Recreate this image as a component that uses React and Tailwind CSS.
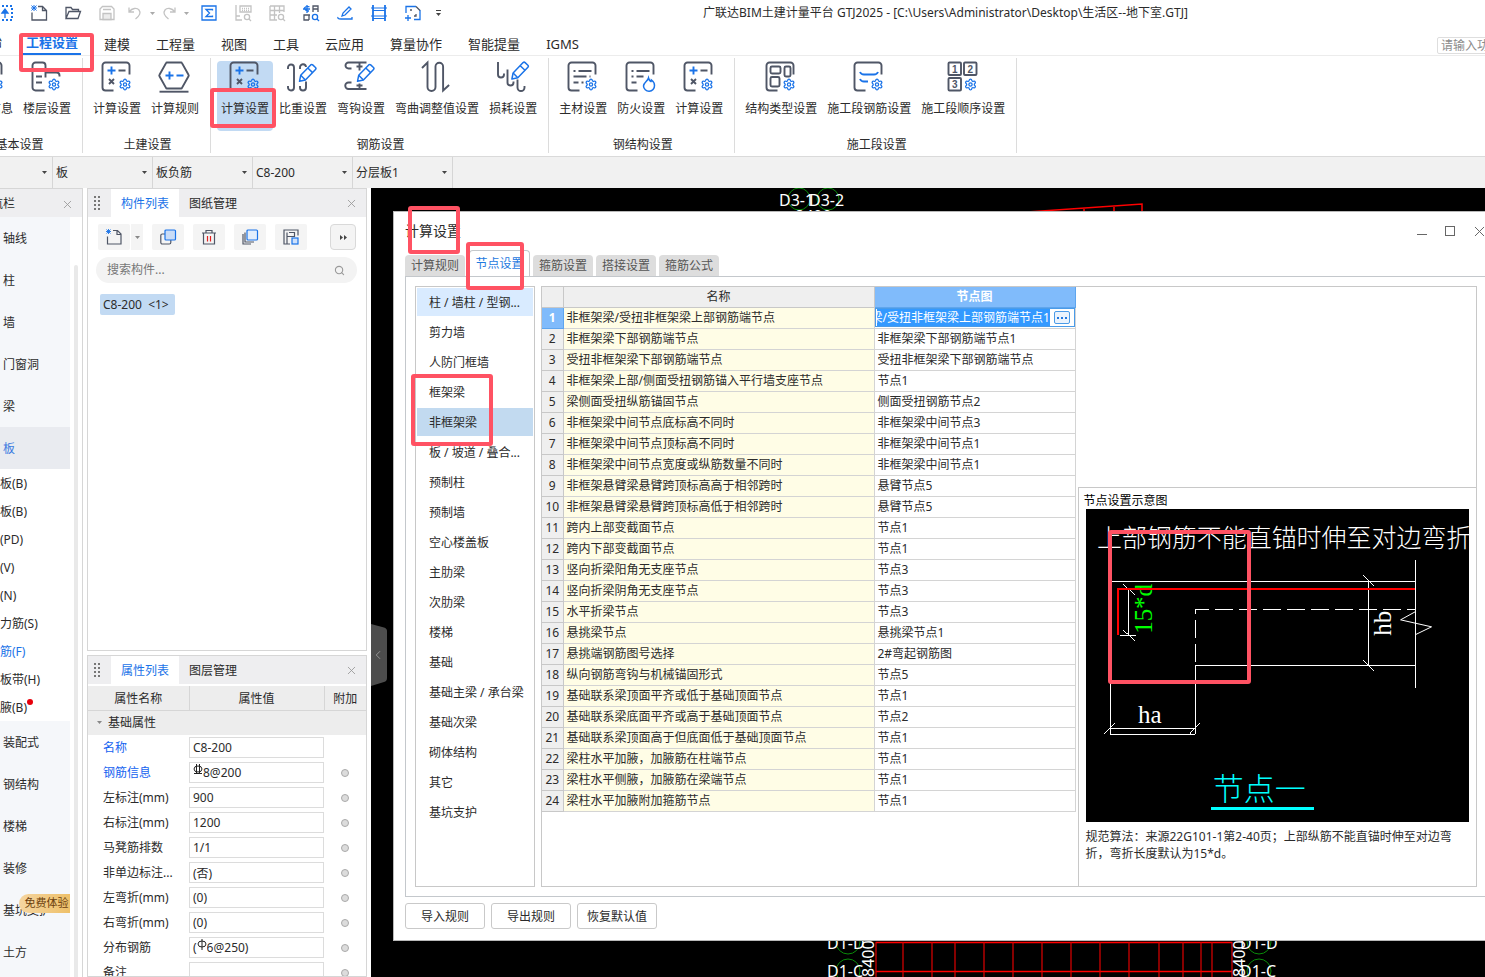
import React, { useEffect, useRef } from "react";
import { Settings, X, Search, ChevronLeft } from "lucide-react";

const INK = "#4f5666";
const BLUE = "#1a73e8";

/* ---------- ribbon icons ---------- */

const Gear = ({ x = 18, y = 17.5, s = 13 }) => (
  <Settings x={x} y={y} width={s} height={s} color={BLUE} strokeWidth={2.4} />
);

const Pencil = ({ dx = 0, dy = 0 }) => (
  <g transform={`translate(${dx} ${dy})`} stroke={BLUE} strokeWidth="1.5" strokeLinejoin="round">
    <path d="M13 20.8l1.2-6L24.2 4.4q1-.9 2 0l2.8 2.6q1 1 0 2L18.9 19.6z" />
    <path d="M21.3 7.5l4.8 4.6M14.2 14.8l4.7 4.8" />
  </g>
);

const boxPath = "M29 14V5a3 3 0 0 0-3-3H5a3 3 0 0 0-3 3v22a3 3 0 0 0 3 3h8";

const shapes = {
  info: (
    <>
      <path d={boxPath} />
      <path d="M7 9h16M7 16h8" />
      <Gear />
    </>
  ),
  floor: (
    <>
      <path d="M14 30H5a3 3 0 0 1-3-3V5a3 3 0 0 1 3-3h7a3 3 0 0 1 3 3v7h11a3 3 0 0 1 3 3v1M15 12v5" />
      <path d="M5.5 16h6M5.5 22h6" />
      <Gear x={17} />
    </>
  ),
  calc: (
    <>
      <path d={boxPath} />
      <path d="M7 10h8M11 6v8" stroke={BLUE} />
      <path d="M18 10h7M8.5 18.5l5 5M13.5 18.5l-5 5" />
      <Gear />
    </>
  ),
  rule: (
    <>
      <path d="M8.5 2h14a1 1 0 0 1 1 .6L30 14.2q.5.8 0 1.6l-6.5 11.6a1 1 0 0 1-1 .6h-14a1 1 0 0 1-1-.6L1 15.8q-.5-.8 0-1.6L7.5 2.6a1 1 0 0 1 1-.6z" />
      <path d="M1 31.2h29" />
      <path d="M7 15h8M11 11v8M18 15h7" stroke={BLUE} />
    </>
  ),
  weight: (
    <>
      <path d="M1.5 8.5V7a3 3 0 0 1 6 0v20a3 3 0 0 1-6 0v-1.5M13.5 8.5V7a3 3 0 0 1 6-.5M19.5 21v6a3 3 0 0 1-6 0v-1.5" />
      <Pencil />
    </>
  ),
  hook: (
    <>
      <path d="M7 8H4a3 3 0 0 1 0-6h18M15 2v8M12 6h6M7 22H4a3.2 3.2 0 0 0 0 6.5h18M15 23v5.5M12 25h6" />
      <Pencil />
    </>
  ),
  bend: <path d="M1.5 7.5L7 2v24.5a4 4 0 0 0 8 0V6a3.8 3.8 0 0 1 7.6 0v24l6-5.5" />,
  loss: (
    <>
      <path d="M1.5 1.5V14a3 3 0 0 0 6 0v-1M11 9v13a3 3 0 0 0 6 0v-1M21 19v8a3.5 3.5 0 0 0 7 0v-1.5" />
      <Pencil dx={2.4} dy={-2.3} />
    </>
  ),
  material: (
    <>
      <path d={boxPath} />
      <path d="M7 10.5h2M12 10.5h13M7 16h13M23 16h1M7 22h5M15 22h2" />
      <Gear />
    </>
  ),
  fire: (
    <>
      <path d={boxPath} />
      <path d="M7 10.5h2M12 10.5h13M7 16h2M12 16h7M7 22h5" />
      <path
        d="M24 17.5c.5 2 1.5 3 2.5 3.5.5-.5.5-1 .5-1.5 2 1.5 3 3.500 3 5.500a5 5 0 0 1-11 .5c0-3.500 4-4.500 5-8z"
        stroke={BLUE}
        strokeWidth="1.5"
      />
    </>
  ),
  structure: (
    <>
      <path d={boxPath} />
      <rect x="6" y="6" width="10" height="7" rx="1.5" />
      <rect x="20" y="6" width="6" height="10" rx="1.5" />
      <rect x="6" y="16.5" width="9" height="9.5" rx="1.5" />
      <Gear />
    </>
  ),
  segment: (
    <>
      <path d={boxPath} />
      <path d="M7.5 11.5q1 2.5 4 2.5h10q3 0 4-2.5M7.5 18.5q1 2.5 4 2.5h4" stroke={BLUE} />
      <Gear />
    </>
  ),
  order: (
    <>
      <rect x="2" y="2" width="12.5" height="12.5" rx="1" />
      <rect x="17.5" y="2" width="12.5" height="12.5" rx="1" />
      <rect x="2" y="17.5" width="12.5" height="12.5" rx="1" />
      <g fill={INK} stroke="none" fontSize="10" fontWeight="700" fontFamily="Liberation Sans, sans-serif" textAnchor="middle">
        <text x="8.3" y="12">1</text>
        <text x="23.8" y="12">2</text>
        <text x="8.3" y="27.5">3</text>
      </g>
      <Gear x={17.5} />
    </>
  ),
};

const RibbonIcon = ({ name }) => (
  <svg className="h-8 w-8" viewBox="0.5 0.5 32 32" fill="none" stroke={INK} strokeWidth="1.9" overflow="visible" aria-hidden="true">
    {shapes[name]}
  </svg>
);

const ribbon = [
  { title: "基本设置", items: [["info", "工程信息"], ["floor", "楼层设置"]] },
  { title: "土建设置", items: [["calc", "计算设置"], ["rule", "计算规则"]] },
  {
    title: "钢筋设置",
    active: 0,
    items: [["calc", "计算设置"], ["weight", "比重设置"], ["hook", "弯钩设置"], ["bend", "弯曲调整值设置"], ["loss", "损耗设置"]],
  },
  { title: "钢结构设置", items: [["material", "主材设置"], ["fire", "防火设置"], ["calc", "计算设置"]] },
  { title: "施工段设置", items: [["structure", "结构类型设置"], ["segment", "施工段钢筋设置"], ["order", "施工段顺序设置"]] },
];

/* ---------- quick access bar ---------- */

const quick = [
  ["导入", BLUE, <><path d="M1 1h14v14H1z" strokeDasharray="2 2" strokeWidth="2" /><path d="M8 13V6M5 8l3-4 3 4z" fill={BLUE} /></>],
  ["新建", INK, <><path d="M7 1.5h4.5l4 4V15H1V7.5M11.5 1.5v4h4" /><path d="M.5 .5l5 5M5.5 .5l-5 5M3 0v6M0 3h6" stroke={BLUE} strokeWidth="1" /></>],
  ["打开", INK, <path d="M1 13.5V2.5h5l1.5 2h6v2M1 13.5L4 6.5h11.5l-2.5 7z" />],
  ["保存", "#c3c3c3", <><path d="M1 14.5V4l2.500-2.500h9L15 4v10.500zM4 4.500h8" /><path d="M4 8.500h8v6H4z" fill="#ececec" /></>],
];
const quick2 = [
  ["汇总", BLUE, <><path d="M1 1h14v14H1z" /><path d="M11.5 5.5V4.5H5L8.5 8 5 11.5h6.5v-1" /></>],
  ["查看报表", "#c3c3c3", <><path d="M1 0v15h6M5 1h11v6H5zM1 11h4" /><path d="M7 3.5h7M7 5.5h7" strokeDasharray="1 1" /><circle cx="12" cy="12" r="2.6" /><path d="M14 14l2 2" /></>],
  ["查看工程量", "#c3c3c3", <><path d="M1 1h14v6M1 1v14h7M1 5.5h14M1 10h7M5.5 1v14M10.5 1v7" /><circle cx="12" cy="12" r="2.6" /><path d="M14 14l2 2" /></>],
  ["查看构件", BLUE, <><path d="M6.500 2q-3-1.500-5 1 .5 3 4.500 3M4 0v8M0 4h7" /><path d="M10 7V1h5v6M10 4h5M1 15v-5h6M1 12.5v2.500h5M6 10v5" stroke={INK} /><circle cx="12" cy="12" r="2.6" /><path d="M14 14l2 2" /></>],
  ["编辑", BLUE, <path d="M5 11l1-3 6-6 2 2-6 6zM1 12q-1 2 3 2h11v-2" />],
  ["楼层", BLUE, <><path d="M2 0v16M14 0v16" strokeWidth="1.800" /><path d="M0 3h16M2 5.500h12M0 11h16M2 13.500h12" strokeWidth="1.100" /></>],
  ["选择", BLUE, <><path d="M1 8V1.5h10M15 5v9.5H9M3 10v6M0 13h6" /><path d="M11 1.5l4 4M5 5h2M9 11h2V9" stroke={INK} /></>],
];

const QuickButton = ({ item }) => (
  <button type="button" aria-label={item[0]} className="flex h-7 w-[34px] shrink-0 items-center justify-center">
    <svg className="h-4 w-4" viewBox="0 0 16 16" fill="none" stroke={item[1]} strokeWidth="1.3" overflow="visible">
      {item[2]}
    </svg>
  </button>
);

const Caret = ({ className = "", color = "#444" }) => (
  <svg className={`h-[3px] w-[5px] shrink-0 ${className}`} viewBox="0 0 5 3" aria-hidden="true">
    <path d="M0 0h5L2.5 3z" fill={color} />
  </svg>
);

const Undo = ({ label, flip }) => (
  <button type="button" aria-label={label} className="flex h-7 w-[34px] shrink-0 items-center justify-center gap-2">
    <svg className="h-[14px] w-[14px]" viewBox="0 0 14 14" fill="none" stroke="#c3c3c3" strokeWidth="1.3">
      <path
        transform={flip ? "matrix(-1 0 0 1 14 0)" : undefined}
        d="M1 1.5v4.5h5M1.5 5.5C4 2 9 1.5 11 4s1 5.5-3.5 9"
      />
    </svg>
    <Caret color="#aaa" />
  </button>
);

const menus = ["建模", "工程量", "视图", "工具", "云应用", "算量协作", "智能提量", "IGMS"];

/* ---------- left data ---------- */

const navTop = ["轴线", "柱", "墙", "门窗洞", "梁"];
const navSub = ["板(B)", "板(B)", "(PD)", "(V)", "(N)", "力筋(S)", "筋(F)", "板带(H)", "腋(B)"];
const navBottom = ["装配式", "钢结构", "楼梯", "装修", "基坑支护", "土方", "基础"];

const Rebar = ({ grade }) => (
  <svg className="-mt-1.5 h-3 w-[10px] shrink-0" viewBox="0 0 10 12" fill="none" stroke="#222" strokeWidth="1">
    <ellipse cx="5" cy="5" rx="4" ry="3" />
    {grade === 3 ? <path d="M3.5 0v10M6.5 0v10M1 9.5h8" /> : <path d="M5 0v11" />}
  </svg>
);

const props = [
  { name: "名称", value: "C8-200", blue: true, noDot: true },
  { name: "钢筋信息", value: "8@200", grade: 3, blue: true },
  { name: "左标注(mm)", value: "900" },
  { name: "右标注(mm)", value: "1200" },
  { name: "马凳筋排数", value: "1/1" },
  { name: "非单边标注...", value: "(否)" },
  { name: "左弯折(mm)", value: "(0)" },
  { name: "右弯折(mm)", value: "(0)" },
  { name: "分布钢筋", value: "6@250)", prefix: "(", grade: 1 },
  { name: "备注", value: "" },
];

/* ---------- dialog data ---------- */

const categories = [
  "柱 / 墙柱 / 型钢...", "剪力墙", "人防门框墙", "框架梁", "非框架梁", "板 / 坡道 / 叠合...", "预制柱", "预制墙", "空心楼盖板",
  "主肋梁", "次肋梁", "楼梯", "基础", "基础主梁 / 承台梁", "基础次梁", "砌体结构", "其它", "基坑支护",
];

const rows = [
  ["非框架梁/受扭非框架梁上部钢筋端节点", "非框架梁/受扭非框架梁上部钢筋端节点1"],
  ["非框架梁下部钢筋端节点", "非框架梁下部钢筋端节点1"],
  ["受扭非框架梁下部钢筋端节点", "受扭非框架梁下部钢筋端节点"],
  ["非框架梁上部/侧面受扭钢筋锚入平行墙支座节点", "节点1"],
  ["梁侧面受扭纵筋锚固节点", "侧面受扭钢筋节点2"],
  ["非框架梁中间节点底标高不同时", "非框架梁中间节点3"],
  ["非框架梁中间节点顶标高不同时", "非框架梁中间节点1"],
  ["非框架梁中间节点宽度或纵筋数量不同时", "非框架梁中间节点1"],
  ["非框架悬臂梁悬臂跨顶标高高于相邻跨时", "悬臂节点5"],
  ["非框架悬臂梁悬臂跨顶标高低于相邻跨时", "悬臂节点5"],
  ["跨内上部变截面节点", "节点1"],
  ["跨内下部变截面节点", "节点1"],
  ["竖向折梁阳角无支座节点", "节点3"],
  ["竖向折梁阴角无支座节点", "节点3"],
  ["水平折梁节点", "节点3"],
  ["悬挑梁节点", "悬挑梁节点1"],
  ["悬挑端钢筋图号选择", "2#弯起钢筋图"],
  ["纵向钢筋弯钩与机械锚固形式", "节点5"],
  ["基础联系梁顶面平齐或低于基础顶面节点", "节点1"],
  ["基础联系梁底面平齐或高于基础顶面节点", "节点2"],
  ["基础联系梁顶面高于但底面低于基础顶面节点", "节点1"],
  ["梁柱水平加腋，加腋筋在柱端节点", "节点1"],
  ["梁柱水平侧腋，加腋筋在梁端节点", "节点1"],
  ["梁柱水平加腋附加箍筋节点", "节点1"],
];

/* ---------- sections ---------- */

function TopBars() {
  return (
    <header className="shrink-0 bg-white">
      <div className="flex h-7 items-center pb-0.5">
        <div className="-ml-3 flex shrink-0 items-center">
          {quick.map((q) => <QuickButton key={q[0]} item={q} />)}
          <Undo label="撤销" />
          <Undo label="恢复" flip />
          {quick2.map((q) => <QuickButton key={q[0]} item={q} />)}
          <button type="button" aria-label="自定义" className="flex h-7 w-4 flex-col items-center justify-center gap-0.5">
            <span className="h-px w-[5px] bg-[#444]" />
            <Caret />
          </button>
        </div>
        <h1 className="min-w-0 flex-1 truncate pr-10 text-center text-xs leading-[18px]">
          广联达BIM土建计量平台 GTJ2025 - [C:\Users\Administrator\Desktop\生活区--地下室.GTJ]
        </h1>
      </div>

      <nav className="flex h-7 items-center border-b border-[#ececec] pb-px text-[13px]">
        <button type="button" className="-ml-6 w-[26px] shrink-0 leading-5">开始</button>
        <button type="button" className="mr-2.5 ml-[21px] h-7 shrink-0 border-b-2 border-[#1a73e8] px-[3px] pt-1 leading-5 font-bold text-[#1a73e8]">
          工程设置
        </button>
        {menus.map((m) => (
          <button key={m} type="button" className="shrink-0 px-[13px] pt-1.5 leading-5">{m}</button>
        ))}
        <input
          aria-label="搜索功能"
          placeholder="请输入功能名称"
          className="-mr-[90px] ml-auto h-[17px] w-[138px] shrink-0 self-end rounded-xs border border-[#dedede] px-[3px] text-xs placeholder:text-[#8c8c8c]"
        />
      </nav>

      <div className="-ml-[45px] flex h-[101px] items-start border-b border-[#dadada] pt-[2px]">
        {ribbon.map((g) => (
          <section key={g.title} className="flex h-[95px] shrink-0 flex-col justify-between border-r border-[#dcdcdc] pr-1.5 pl-1.5">
            <div className="flex gap-0.5 pt-[3px] pr-px">
              {g.items.map(([icon, label], i) => (
                <button
                  key={label}
                  type="button"
                  className={`flex h-[70px] flex-col items-center gap-1.5 rounded-sm px-1 ${g.active === i ? "bg-[#c2daf3]" : ""}`}
                >
                  <RibbonIcon name={icon} />
                  <span className="text-xs leading-5 whitespace-nowrap">{label}</span>
                </button>
              ))}
            </div>
            <h2 className="pl-0.5 text-center text-xs leading-4">{g.title}</h2>
          </section>
        ))}
      </div>

      <div className="-ml-12 flex h-[31px] bg-[#f1f1f1] text-xs">
        {[["楼层", " "], ["构件类别", "板"], ["构件类型", "板负筋"], ["构件", "C8-200"], ["分层", "分层板1"]].map(([label, v], i) => (
          <div key={label} className={`relative flex shrink-0 items-center border-r border-[#d6d6d6] ${i === 0 ? "w-[101px]" : "w-[100px]"}`}>
            <select aria-label={label} className="h-full w-full appearance-none bg-transparent pl-[3px]" defaultValue={v}>
              <option>{v}</option>
            </select>
            <Caret className="pointer-events-none absolute right-[5px]" />
          </div>
        ))}
      </div>
    </header>
  );
}

function NavColumn() {
  return (
    <aside className="flex w-[83px] shrink-0 flex-col overflow-hidden border-t border-r border-[#d6d6d6] bg-white text-xs">
      <div className="flex h-[28px] shrink-0 items-center justify-between bg-[#eeeef0] pt-0.5 pr-2">
        <h2 className="-ml-[21px] leading-[18px]">导航栏</h2>
        <button type="button" aria-label="关闭导航栏"><X size={13} strokeWidth={1.6} color="#999" /></button>
      </div>
      <div className="flex min-h-0 flex-1 pr-1">
        <ul className="w-[70px] shrink-0 overflow-hidden bg-[#f5f7fa]">
          {navTop.map((t) => <li key={t} className="flex h-[42px] items-center pt-0.5 pl-[3px]">{t}</li>)}
          <li className="flex h-[42px] items-center bg-[#e9ebf0] pt-0.5 pl-[3px] text-[#3d7be0]">板</li>
          {navSub.map((t, i) => (
            <li key={`${t}${i}`} className={`flex h-7 items-center bg-white pt-0.5 ${i === 6 ? "text-[#1a73e8]" : ""}`}>
              {t}
              {i === 8 && <span className="mb-3 size-1.5 rounded-full bg-red-600" />}
            </li>
          ))}
          {navBottom.map((t) => (
            <li key={t} className="relative flex h-[42px] items-center pt-0.5 pl-[3px]">
              {t}
              {t === "基坑支护" && (
                <span className="absolute top-[5px] right-0 flex h-[19px] w-[51px] items-center justify-center rounded-l-full bg-linear-to-r from-[#f5d5a0] to-[#eec068] pl-1 text-[11px] whitespace-nowrap text-[#6b3e0c]">
                  免费体验
                </span>
              )}
            </li>
          ))}
        </ul>
        <div className="mt-12 ml-1 w-1 rounded-t-full bg-[#e9e9e9]" />
      </div>
    </aside>
  );
}

function PanelTabs({ active, other }) {
  return (
    <div className="flex h-[28px] shrink-0 items-center bg-[#eeeef0] text-xs">
      <svg className="ml-1.5 h-[14px] w-[7px]" viewBox="0 0 7 14" fill="#777" aria-hidden="true">
        {[0, 4, 8, 12].map((y) => (
          <g key={y}><rect y={y} width="2" height="2" /><rect x="4" y={y} width="2" height="2" /></g>
        ))}
      </svg>
      <button type="button" className="ml-2.5 h-full w-[68px] bg-white pt-0.5 text-[#1a73e8]">{active}</button>
      <button type="button" className="h-full w-[68px] pt-0.5">{other}</button>
      <button type="button" aria-label="关闭" className="mr-2 ml-auto"><X size={13} strokeWidth={1.6} color="#999" /></button>
    </div>
  );
}

const ToolButton = ({ label, children }) => (
  <button type="button" aria-label={label} className="flex h-[26px] w-8 items-center justify-center rounded-xs bg-[#f4f4f4]">
    <svg className="h-4 w-4" viewBox="0 0 16 16" fill="none" stroke={INK} strokeWidth="1.2" overflow="visible">{children}</svg>
  </button>
);

function ComponentPanel() {
  return (
    <section className="flex min-h-0 flex-1 flex-col border border-[#d6d6d6] bg-white text-xs">
      <PanelTabs active="构件列表" other="图纸管理" />
      <div className="flex items-center pt-[7px] pr-2.5 pl-2.5">
        <ToolButton label="新建">
          <path d="M7 1.5h4.5l3.5 3.5V15H1.5V7.5M11 1.5v4h4" />
          <path d="M.5 .5l4 4M4.5 .5l-4 4M2.5 0v5M0 2.5h5" stroke={BLUE} strokeWidth=".9" />
        </ToolButton>
        <button type="button" aria-label="更多新建" className="mr-[9px] ml-px flex h-[26px] w-3 items-center justify-center bg-[#f4f4f4]">
          <Caret color="#888" />
        </button>
        <div className="flex gap-[9px]">
          <ToolButton label="复制">
            <rect x=".8" y="5" width="10" height="10" rx="1.5" />
            <rect x="5" y="1" width="10.5" height="10" rx="1" fill="#c9dcf7" stroke={BLUE} />
          </ToolButton>
          <ToolButton label="删除">
            <path d="M1 4h14M5 4V1.5h6V4M2.5 4v11h11V4" />
            <path d="M6.5 7v5.5M9.5 7v5.5" stroke="#e02020" />
          </ToolButton>
          <ToolButton label="层间复制">
            <path d="M1 5v10h8M3 3.5V13h9" />
            <rect x="5" y="1" width="10.5" height="10" rx="1" fill="#e3eefc" stroke={BLUE} />
          </ToolButton>
          <ToolButton label="存档">
            <path d="M7 15H1V1h14v5.500M4 15V3.500M4 7.500h7.500V3.500H6" />
            <rect x="9" y="9" width="6" height="6" fill="#cfe1fb" stroke={BLUE} />
          </ToolButton>
        </div>
        <button type="button" aria-label="展开" className="ml-auto flex size-[26px] items-center justify-center rounded-sm border border-[#d9d9d9] bg-[#f4f4f4]">
          <svg className="h-[5px] w-[7px]" viewBox="0 0 7 5" fill="#444"><path d="M0 0l3 2.5L0 5zM4 0l3 2.5L4 5z" /></svg>
        </button>
      </div>
      <label className="mt-[7px] mr-[9px] ml-2 flex h-[26px] shrink-0 items-center rounded-full bg-[#f3f3f3] pr-3 pl-[11px]">
        <input aria-label="搜索构件" placeholder="搜索构件..." className="min-w-0 flex-1 bg-transparent placeholder:text-[#777]" />
        <Search size={11} color="#999" strokeWidth={2.4} />
      </label>
      <div className="px-3 pt-[11px]">
        <span className="inline-flex h-[21px] items-center rounded-xs bg-[#c2daf3] pr-1.5 pl-[3px]">C8-200 &nbsp;&lt;1&gt;</span>
      </div>
    </section>
  );
}

function PropertyPanel() {
  return (
    <section className="flex h-[322px] shrink-0 flex-col overflow-hidden border border-[#d6d6d6] bg-white text-xs">
      <PanelTabs active="属性列表" other="图层管理" />
      <div className="mt-0.5 flex min-h-0 flex-1 flex-col">
        <table className="w-full table-fixed border-collapse">
          <colgroup><col className="w-[101px]" /><col /><col className="w-[42px]" /></colgroup>
          <thead>
            <tr className="h-6 border-b border-[#d6d6d6] bg-[#ededed]">
              <th className="border-r border-[#d6d6d6] p-0 pt-0.5 font-normal">属性名称</th>
              <th className="border-r border-[#d6d6d6] p-0 pt-0.5 font-normal">属性值</th>
              <th className="p-0 pt-0.5 font-normal">附加</th>
            </tr>
          </thead>
          <tbody>
            <tr className="h-[25px] bg-[#ededed]">
              <td colSpan={3} className="pl-[9px]">
                <span className="flex items-center gap-1.5"><Caret color="#888" />基础属性</span>
              </td>
            </tr>
            {props.map((p) => (
              <tr key={p.name} className="h-[25px]">
                <td className={`pl-[15px] whitespace-nowrap ${p.blue ? "text-[#1463f0]" : ""}`}>{p.name}</td>
                <td className="py-0 pr-0">
                  <div className="flex h-[21px] items-center border border-[#dcdcdc] pl-[3px]">
                    {p.prefix && <span>{p.prefix}</span>}
                    {p.grade && <Rebar grade={p.grade} />}
                    <input aria-label={p.name} defaultValue={p.value} className="h-[19px] w-full min-w-0 bg-transparent" />
                  </div>
                </td>
                <td>
                  {!p.noDot && (
                    <input
                      type="checkbox"
                      aria-label={`${p.name}附加`}
                      className="mx-auto block size-2 appearance-none rounded-full border border-[#aaa] bg-[#dcdcdc]"
                    />
                  )}
                </td>
              </tr>
            ))}
          </tbody>
        </table>
      </div>
    </section>
  );
}

function NodeDiagram() {
  return (
    <svg className="w-full shrink-0 bg-black" viewBox="0 0 384 313" fill="none" stroke="#fff" strokeWidth="1" shapeRendering="crispEdges" role="img" aria-label="节点一">
      <g stroke="none" fill="#fff" fontFamily="'Liberation Serif', 'Noto Sans CJK SC', sans-serif" fontWeight="300">
        <text x="11" y="38" fontSize="25">上部钢筋不能直锚时伸至对边弯折</text>
        <text x="52" y="214" fontSize="25">ha</text>
        <text fontSize="25" transform="translate(305 127) rotate(-90)">hb</text>
        <text fontSize="25" fill="#00ff00" transform="translate(66 125) rotate(-90)">15*d</text>
        <text x="127" y="291" fontSize="31" fill="#00ffff">节点一</text>
      </g>
      <path d="M24.5 72.5H329.5M109.5 156.5H329.5M329.5 51V179" />
      <path d="M109.5 225V100.5H329.5" strokeDasharray="18 6" />
      <path d="M109.5 156V225.5H24.5V165M24.5 219.5H109.5M18 225L29 214M104 225L114 214" />
      <path d="M282.5 72V157M277 66L288 77M277 151L288 162" />
      <path d="M42.5 80V127M34 126.5H50M37 75L49 86M37 121L49 132" />
      <path d="M329.5 103L315 111L346 118L329.5 126" shapeRendering="auto" />
      <path d="M32 126V80H329" stroke="#ff0000" strokeWidth="2" />
      <path d="M125 299.5H228" stroke="#00ffff" strokeWidth="3" />
    </svg>
  );
}

function EditableCell({ value }) {
  const ref = useRef(null);
  useEffect(() => {
    if (ref.current) ref.current.scrollLeft = ref.current.scrollWidth;
  }, []);
  return (
    <div className="flex h-[19px] items-center justify-between border border-[#4a9be8] bg-white pr-1 pl-px">
      <input ref={ref} aria-label="节点图" defaultValue={value} className="h-[17px] w-[173px] bg-[#3399ff] text-white outline-none" />
      <button type="button" aria-label="选择节点图" className="flex h-[13px] w-4 items-center justify-center gap-[2px] rounded-xs border border-[#4a9be8] bg-[#eaf3fd]">
        <i className="size-0.5 bg-[#2277dd]" /><i className="size-0.5 bg-[#2277dd]" /><i className="size-0.5 bg-[#2277dd]" />
      </button>
    </div>
  );
}

function NodeTable() {
  return (
    <table className="w-[533px] shrink-0 table-fixed border-collapse self-start">
      <colgroup><col className="w-[21px]" /><col className="w-[311px]" /><col className="w-[201px]" /></colgroup>
      <thead>
        <tr className="h-5">
          <th className="border-r border-b border-[#c8c8c8] bg-[#efefef]" aria-label="序号" />
          <th className="border-r border-b border-[#c8c8c8] bg-[#efefef] p-0 pt-px leading-[18px] font-normal">名称</th>
          <th className="border border-t-0 border-[#5ea5ee] bg-[#80bbfb] p-0 pt-px leading-[18px] font-bold text-white">节点图</th>
        </tr>
      </thead>
      <tbody>
        {rows.map(([name, node], i) => (
          <tr key={name} className="h-[21px]">
            <td className={`border-r border-b p-0 text-center leading-[18px] ${i === 0 ? "border-[#5ea5ee] bg-[#80bbfb] font-bold text-white" : "border-[#c8c8c8] bg-[#efefef]"}`}>
              {i + 1}
            </td>
            <td className="border-r border-b border-[#d4d4d4] bg-[#fffde6] p-0 pl-[3px] leading-[18px] whitespace-nowrap">{name}</td>
            <td className={`border-r border-b border-[#d4d4d4] p-0 leading-[18px] whitespace-nowrap ${i === 0 ? "" : "pl-[3px]"}`}>
              {i === 0 ? <EditableCell value={node} /> : node}
            </td>
          </tr>
        ))}
      </tbody>
    </table>
  );
}

const dialogTabs = ["计算规则", "节点设置", "箍筋设置", "搭接设置", "箍筋公式"];

function SettingsDialog() {
  return (
    <div role="dialog" aria-label="计算设置" className="absolute top-[23px] -right-3 bottom-9 left-[22px] flex flex-col border border-[#b9b9b9] bg-white pl-[11px] text-xs">
      <div className="flex h-[38px] shrink-0 items-center justify-between pr-2">
        <h2 className="text-sm leading-5">计算设置</h2>
        <div className="flex items-center gap-4">
          <button type="button" aria-label="最小化" className="flex size-3 items-end pb-0.5"><span className="h-px w-2.5 bg-[#666]" /></button>
          <button type="button" aria-label="最大化" className="size-[10px] border border-[#666]" />
          <button type="button" aria-label="关闭"><X size={17} strokeWidth={1.4} color="#666" /></button>
        </div>
      </div>
      <div className="flex h-[26px] shrink-0 items-end gap-[3px]">
        {dialogTabs.map((t, i) =>
          i === 1 ? (
            <button key={t} type="button" className="-mb-px ml-px h-[27px] w-[61px] rounded-t-sm border border-b-0 border-[#c4c8cc] bg-white text-[#1f7ae0]">{t}</button>
          ) : (
            <button key={t} type="button" className="h-[21px] w-[60px] rounded-t-sm bg-[#dddddd] text-[#555]">{t}</button>
          )
        )}
      </div>
      <div className="flex min-h-0 flex-1 border border-[#c4c8cc] py-[9px] pr-[18px] pl-[9px]">
        <ul className="flex w-[120px] shrink-0 flex-col gap-0.5 border border-[#c8c8c8] p-px">
          {categories.map((c, i) => (
            <li
              key={c}
              className={`flex h-7 shrink-0 items-center pt-0.5 pl-3 whitespace-nowrap ${i === 0 ? "bg-[#d9ebff]" : i === 4 ? "bg-[#c2daf0]" : ""}`}
            >
              {c}
            </li>
          ))}
        </ul>
        <div className="ml-1.5 flex min-w-0 flex-1 border border-[#c8c8c8]">
          <NodeTable />
          <section className="ml-0.5 flex min-w-0 flex-1 flex-col justify-end">
            <div className="flex h-[399px] flex-col border-t border-l border-[#c8c8c8] pt-1 pr-[7px] pl-[7px]">
              <h3 className="-ml-0.5 leading-[17px] text-black">节点设置示意图</h3>
              <NodeDiagram />
              <p className="pt-1.5 leading-[17px]">规范算法：来源22G101-1第2-40页；上部纵筋不能直锚时伸至对边弯折，弯折长度默认为15*d。</p>
            </div>
          </section>
        </div>
      </div>
      <div className="flex h-[43px] shrink-0 items-start gap-1.5 pt-1.5">
        {["导入规则", "导出规则", "恢复默认值"].map((b) => (
          <button key={b} type="button" className="h-[26px] w-20 rounded-[3px] border border-[#c9c9c9] pt-px">{b}</button>
        ))}
      </div>
    </div>
  );
}

function Canvas() {
  const cols = [505, 532, 561, 584, 613, 642, 671, 700, 729, 758, 788, 812, 830, 841, 861];
  return (
    <main className="relative min-w-0 flex-1 overflow-hidden bg-black">
      <svg className="absolute top-0 left-0 h-6 w-[1114px]" viewBox="0 0 1114 24" fill="none" fontFamily="'Noto Sans', sans-serif" aria-hidden="true">
        <g stroke="#0a8a0a"><circle cx="428" cy="11" r="11" /><circle cx="457" cy="11" r="11" /></g>
        <path d="M656 24L771 16V24M743 18V24M713 20V24" stroke="#f00" strokeWidth="1.5" />
        <g fill="#fff" fontSize="16"><text x="408" y="18">D3-1</text><text x="438" y="18">D3-2</text><text x="424" y="34">8400</text></g>
      </svg>
      <svg className="absolute bottom-0 left-0 h-9 w-[1114px]" viewBox="0 0 1114 36" fill="none" fontFamily="'Noto Sans', sans-serif" aria-hidden="true">
        <path d="M505 1.5H861M505 30.5H861" stroke="#f00" strokeWidth="1.5" />
        {cols.map((x) => <path key={x} d={`M${x} 1V36`} stroke="#e00000" strokeWidth="1.2" />)}
        <g stroke="#0a8a0a">
          <circle cx="477" cy="1" r="12" /><circle cx="477" cy="30" r="12" /><circle cx="888" cy="1" r="12" /><circle cx="888" cy="30" r="12" />
        </g>
        <g fill="#fff" fontSize="16">
          <text x="456" y="8">D1-D</text><text x="456" y="36">D1-C</text>
          <text x="869" y="8">D1-D</text><text x="869" y="36">D1-C</text>
          <text transform="translate(503 36) rotate(-90)">8400</text>
          <text transform="translate(874 36) rotate(-90)">8400</text>
        </g>
      </svg>
      <button type="button" aria-label="收起面板" className="absolute bottom-[291px] left-0 h-[62px] w-4">
        <svg className="h-full w-full" viewBox="0 0 16 62"><path d="M0 0L13 3.5Q16 4.5 16 7V54Q16 57 13 58L0 62z" fill="#4d4d4d" /></svg>
        <ChevronLeft className="absolute top-6 left-0 text-[#999]" size={14} strokeWidth={1.6} />
      </button>
      <SettingsDialog />
    </main>
  );
}

const Mark = ({ className }) => (
  <div className={`pointer-events-none absolute rounded-[3px] border-4 border-[#ff5263] ${className}`} />
);

export default function App() {
  return (
    <div className="relative flex h-screen flex-col overflow-hidden bg-white font-['Noto_Sans','Noto_Sans_CJK_SC',sans-serif] text-[#2b2b2b]">
      <TopBars />
      <div className="flex min-h-0 flex-1">
        <NavColumn />
        <div className="flex w-[288px] shrink-0 flex-col gap-1 pr-1 pl-1">
          <ComponentPanel />
          <PropertyPanel />
        </div>
        <Canvas />
      </div>
      <Mark className="top-[33px] left-[19px] h-[39px] w-[75px]" />
      <Mark className="top-[88px] left-[210px] h-10 w-[66px]" />
      <Mark className="top-[206px] left-[408px] h-12 w-[52px]" />
      <Mark className="top-[242px] left-[466px] h-12 w-[58px]" />
      <Mark className="top-[374px] left-[411px] h-[72px] w-[82px]" />
      <Mark className="top-[530px] left-[1108px] h-[154px] w-[143px]" />
    </div>
  );
}
